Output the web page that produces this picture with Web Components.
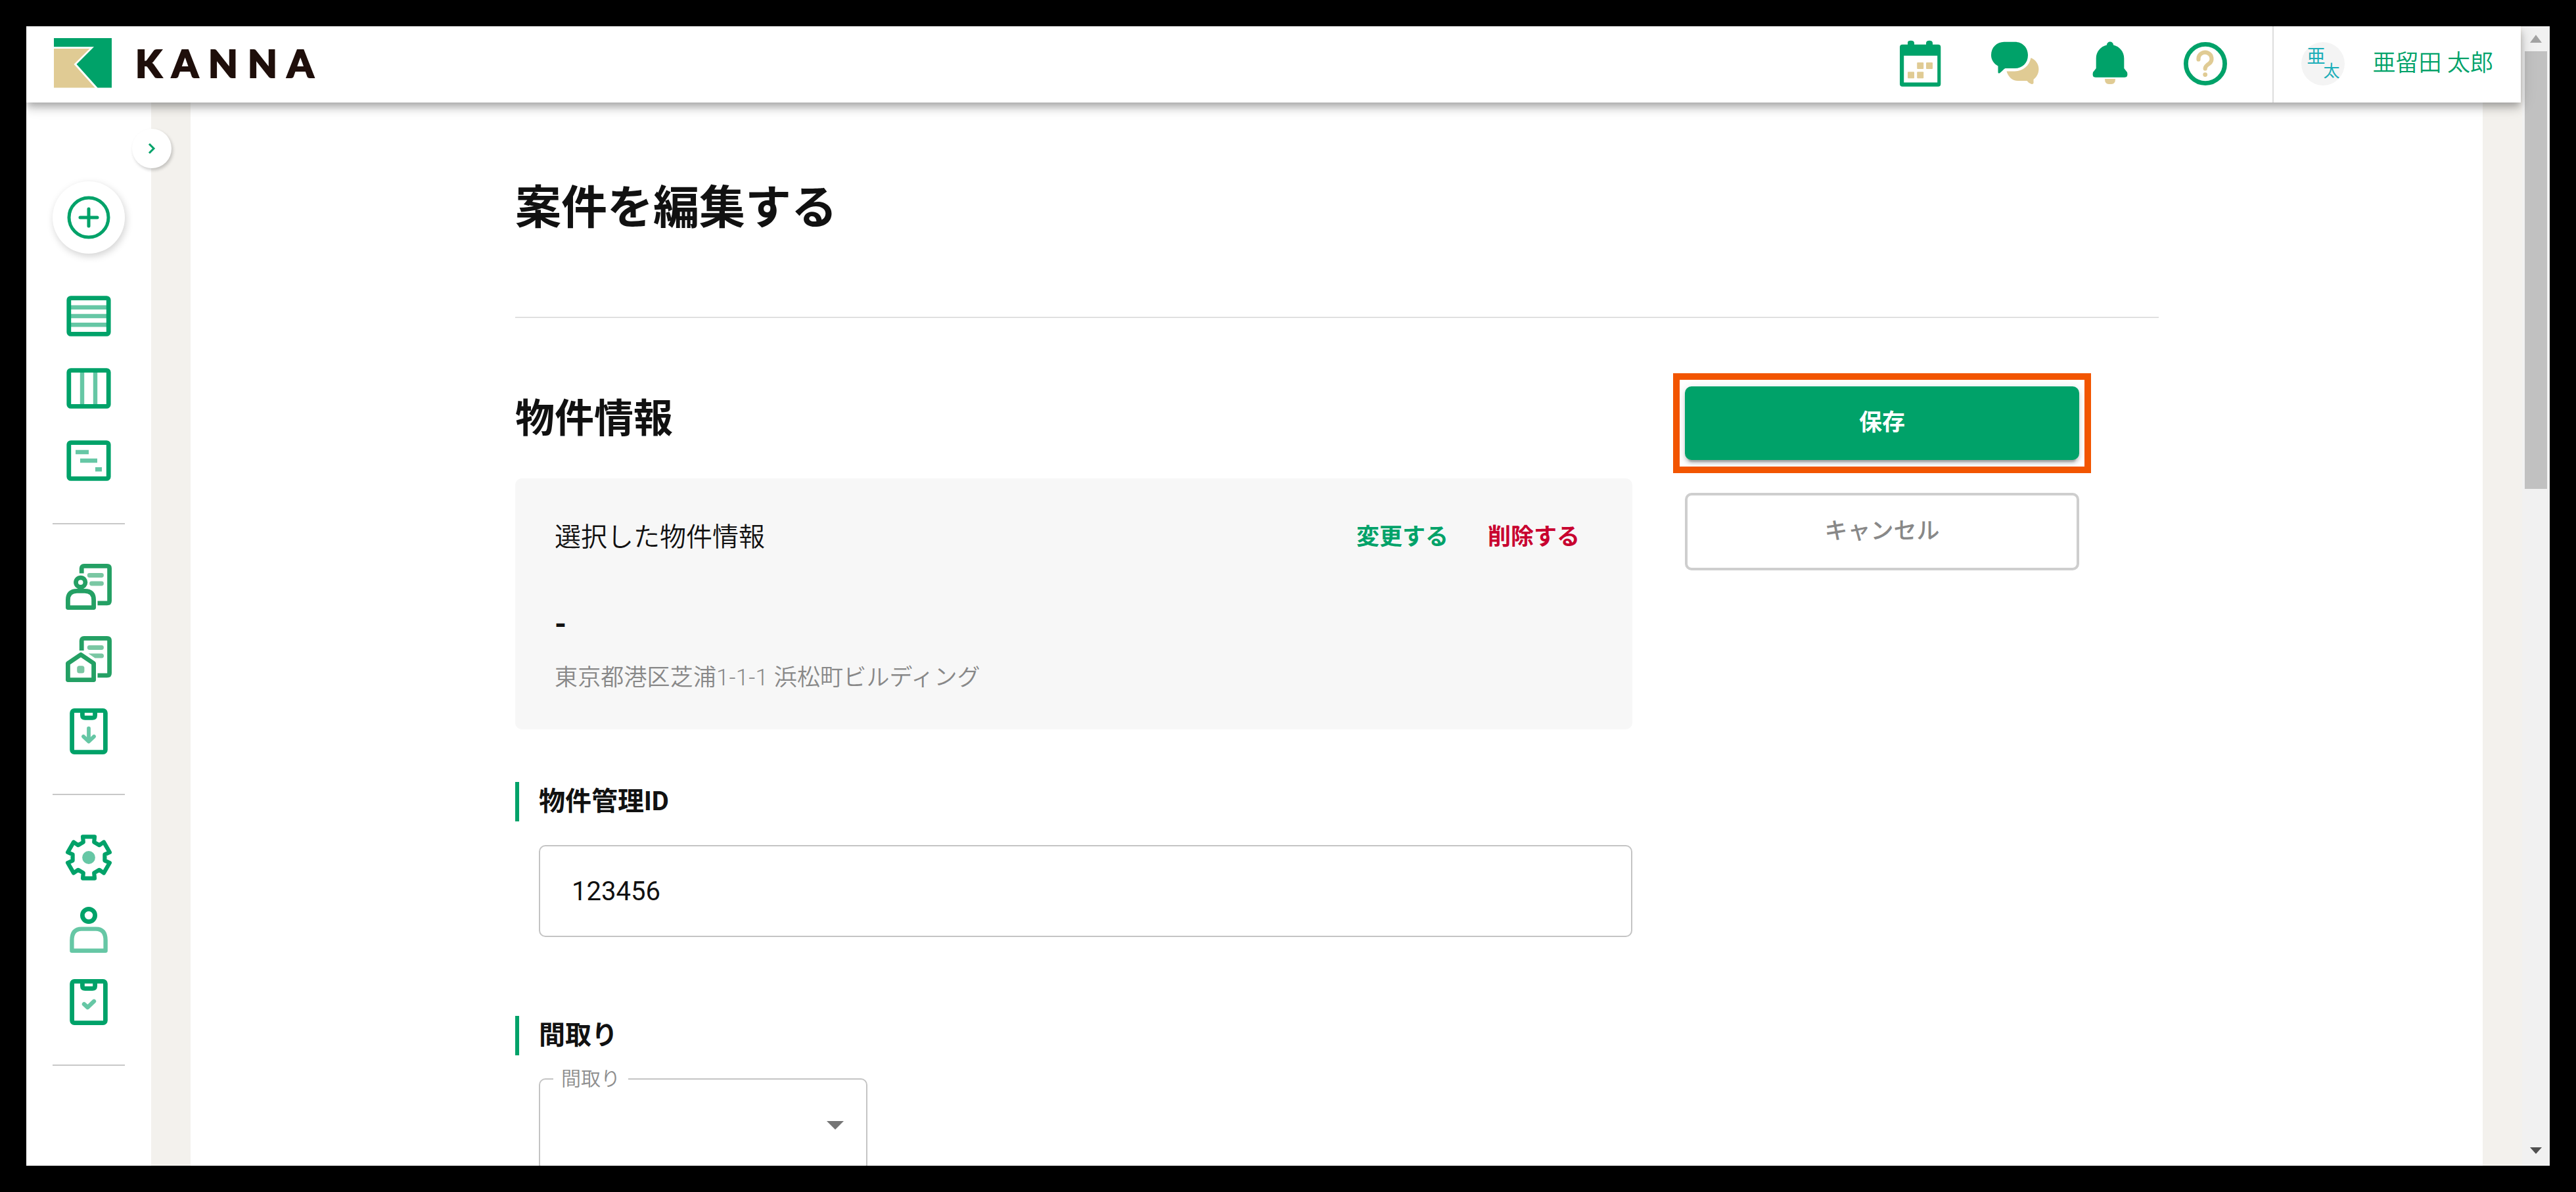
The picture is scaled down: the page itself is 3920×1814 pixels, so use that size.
<!DOCTYPE html>
<html lang="ja">
<head>
<meta charset="UTF-8">
<title>KANNA</title>
<style>
    :root {
        --green: #00a269;
        --tan: #e0cb94;
        --beige: #f3f1ed;
        --text: #111;
        --muted: #888;
    }
    html, body {
        margin: 0;
        height: 100%;
    }
    body {
        box-sizing: border-box;
        padding: 40px;
        background: #000;
        color: var(--text);
        font-family: Roboto, "Noto Sans CJK JP", sans-serif;
        overflow: hidden;
    }
</style>
</head>
<body>
<kanna-app>
    <kanna-header slot="header" initial1="亜" initial2="太">亜留田 太郎</kanna-header>
    <side-nav slot="nav"></side-nav>
    <page-title>案件を編集する</page-title>
    <edit-layout>
        <h2 slot="heading">物件情報</h2>
        <property-card>
            選択した物件情報
            <span slot="change">変更する</span>
            <span slot="remove">削除する</span>
            <span slot="name">-</span>
            <span slot="address">東京都港区芝浦1-1-1 浜松町ビルディング</span>
        </property-card>
        <form-field label="物件管理ID"><text-box>123456</text-box></form-field>
        <form-field label="間取り" tight><select-box>間取り</select-box></form-field>
        <highlight-frame slot="actions"><k-button variant="primary">保存</k-button></highlight-frame>
        <k-button slot="actions" variant="outline">キャンセル</k-button>
    </edit-layout>
</kanna-app>

<script>
// Builds an element class whose shadow root holds the given markup
function define(name, html) {
    const template = document.createElement('template');
    customElements.define(name, class extends HTMLElement {
        constructor() {
            super();
            template.innerHTML = typeof html === 'function' ? html(this) : html;
            this.attachShadow({ mode: 'open' }).appendChild(template.content.cloneNode(true));
        }
    });
}

// Six-toothed outline centred on 35,35
function gearPath() {
    const tooth = [[-8.2, -23.4], [-9, -31.6], [9, -31.6], [8.2, -23.4]];
    const points = [];
    for (let k = 0; k < 6; k++) {
        const a = k * Math.PI / 3;
        tooth.forEach(([x, y]) => {
            const px = 35 + x * Math.cos(a) - y * Math.sin(a);
            const py = 35 + x * Math.sin(a) + y * Math.cos(a);
            points.push(px.toFixed(1) + ' ' + py.toFixed(1));
        });
    }
    return 'M' + points.join('L') + 'Z';
}

const frame = '<rect x="4.8" y="7.6" width="60.4" height="54.8" rx="3"/>';
const board = '<rect x="9.6" y="3.4" width="50.8" height="63.2" rx="3.5"/><path d="M25.4 3.4V10.5Q25.4 14.4 29.4 14.4H40.6Q44.6 14.4 44.6 10.5V3.4"/>';

const ICONS = {
    list: `${frame}<path class="soft" d="M8 21.8H62M8 35H62M8 48.2H62"/>`,
    columns: `${frame}<path class="soft" d="M25 10V60M45 10V60"/>`,
    gantt: `${frame}<path class="soft" d="M15 22H35M22 35H48M45 48.3H55"/>`,
    client: `<g stroke="#24a064">
        <path d="M24.2 14.6V7Q24.2 3.4 27.8 3.4H63Q66.6 3.4 66.6 7V56.2Q66.6 59.8 63 59.8H48.5"/>
        <circle cx="22.7" cy="28.3" r="7.2"/>
        <path d="M3.4 66.6V55Q3.4 41.3 17 41.3H29Q42.6 41.3 42.6 55V66.6Z"/>
        <path class="round" stroke="#7ac7a3" d="M36.2 17.5H54.5M39.5 30H54.5"/></g>`,
    house: `<g stroke="#24a064">
        <path d="M24.2 22V7Q24.2 3.4 27.8 3.4H63Q66.6 3.4 66.6 7V56.2Q66.6 59.8 63 59.8H48.5"/>
        <path d="M3.4 66.6V41.5L23 28.2L42.6 41.5V66.6Z"/>
        <path class="round" stroke="#7ac7a3" d="M36.2 17.5H54.5"/></g>
        <path fill="#7ac7a3" stroke="none" d="M34.5 26.4H55Q58 27 58 30Q58 33.4 55 33.6H44.5Z"/>
        <rect x="17.2" y="45.3" width="11.2" height="11.2" rx="3.5" fill="#7ac7a3" stroke="none"/>`,
    inbox: `${board}<path class="soft round thin" d="M35 30.5V50M27 42.8L35 50.5L43 42.8"/>`,
    gear: `<path stroke-width="6.2" d="${gearPath()}"/><circle class="dot" cx="35" cy="35" r="9.9"/>`,
    user: `<circle cx="35" cy="13" r="9.6"/><path class="soft" d="M9.4 66.8V51Q9.4 33.6 24 33.6H46Q60.6 33.6 60.6 51V66.8Z"/>`,
    check: `${board}<path class="soft round" d="M28 38.2L33.4 43L43 33.8"/>`,
    calendar: `<path class="fill" d="M8 5.7H16V4A4 4 0 0 1 17 .5Q21 -1 24.5 .5A4 4 0 0 1 26 4V5.7H44V4A4 4 0 0 1 45.5 .5Q49 -1 52.5 .5A4 4 0 0 1 54 4V5.7H62.3A4 4 0 0 1 66.3 9.7V65.7A4 4 0 0 1 62.3 69.7H8A4 4 0 0 1 4 65.7V9.7A4 4 0 0 1 8 5.7Z"/>
        <path fill="#fff" stroke="none" d="M10.2 22.8H61.2V63.5H10.2Z"/>
        <g class="tan"><rect x="30.2" y="33" width="10" height="10" rx="1"/><rect x="44" y="33" width="10" height="10" rx="1"/>
        <rect x="16" y="47.2" width="10" height="10" rx="1"/><rect x="30.2" y="47.2" width="10" height="10" rx="1"/></g>`,
    chat: `<path class="fill" d="M19 1.7H35C46.5 1.7 55 10 55 22S46.5 42 35 42H20.5C18 43 15 47 11.5 49.5Q9.5 50 9.5 48V38.5C3 35-1 29-1 22C-1 10 7.5 1.7 19 1.7Z"/>
        <path class="tan" d="M22.5 46.5H35C48 46 57 38 59.5 26C66.5 29 71.4 35 71.4 43C71.4 50 68 55.5 63.5 59V64.5Q63 66.5 60 65.8Q56 64.5 53.5 61H40C31 61 25 55 22.5 46.5Z"/>`,
    bell: `<path class="fill" d="M30 6.5A5 5 0 0 1 40 6.5C50 9 56.3 17 56.3 27V42L61 48Q63 55.7 57 55.7H13Q7 55.7 9 48L13.7 42V27C13.7 17 20 9 30 6.5Z"/>
        <path class="tan" d="M27 58H43Q43 66 37 66H33Q27 66 27 58Z"/>`,
    help: `<circle cx="35" cy="35" r="29.6"/>
        <path class="round" stroke="#e0cb94" stroke-width="6.2" d="M24.5 28.5V27A10 9.6 0 1 1 41 34.6Q34.7 38.5 34.7 42.5"/><circle class="tan" cx="34.7" cy="51.6" r="3.4"/>`
};

define('k-icon', el => `
    <style>
        :host { display: block; width: 70px; height: 70px; }
        svg { display: block; overflow: visible; fill: none; stroke: var(--green); stroke-width: 6.8; stroke-linejoin: round; }
        .soft { stroke-opacity: .6; stroke-width: 6.4; }
        .round { stroke-linecap: round; }
        .thin { stroke-width: 5.8; }
        .dot { fill: var(--green); fill-opacity: .6; stroke: none; }
        .fill { fill: var(--green); stroke: none; }
        .tan { fill: var(--tan); stroke: none; }
    </style>
    <svg viewBox="0 0 70 70" width="70" height="70">${ICONS[el.getAttribute('name')]}</svg>
`);

define('kanna-logo', `
    <style>
        :host { display: flex; align-items: center; }
        svg { display: block; }
        span {
            margin-left: 36px;
            color: #1f0f0b;
            font: 900 58px/74px Lato, sans-serif;
            letter-spacing: 15px;
            -webkit-text-stroke: 2px #1f0f0b;
        }
    </style>
    <svg viewBox="0 0 88 76" width="88" height="76">
        <path fill="#00a269" d="M0 0H88V75.6H66.5L34.5 39.7L61 13.3H0Z"/>
        <path fill="#e0cb94" d="M0 16H54.5L30.5 39.7L62.5 75.6H0Z"/>
    </svg>
    <span>KANNA</span>
`);

define('kanna-header', el => `
    <style>
        :host {
            display: flex;
            align-items: center;
            height: 116px;
            box-sizing: border-box;
            padding-left: 42px;
            margin-right: 2px;
            background: #fff;
            box-shadow: 0 5px 10px -2.5px rgba(0,0,0,.2), 0 10px 12.5px rgba(0,0,0,.14), 0 2.5px 25px rgba(0,0,0,.12);
            position: relative;
            z-index: 2;
        }
        kanna-logo { margin-bottom: 4px; }
        nav { display: flex; gap: 74.8px; margin: 0 67.5px 3px auto; }
        .user {
            display: flex;
            align-items: center;
            align-self: stretch;
            padding: 0 42px 2px;
            border-left: 2px solid #ddd;
            color: var(--green);
            font-size: 35px;
            font-weight: 350;
            line-height: 42px;
        }
        .avatar {
            box-sizing: border-box;
            display: flex;
            flex-direction: column;
            width: 66px;
            height: 66px;
            padding: 12px 8px;
            margin-right: 42px;
            border-radius: 50%;
            background: #f4f4f4;
            color: #1caeb9;
            font-size: 28px;
            font-weight: 400;
            line-height: 22px;
        }
        .avatar span + span { align-self: flex-end; font-size: 25px; }
    </style>
    <kanna-logo></kanna-logo>
    <nav>
        <k-icon name="calendar"></k-icon>
        <k-icon name="chat"></k-icon>
        <k-icon name="bell"></k-icon>
        <k-icon name="help"></k-icon>
    </nav>
    <div class="user">
        <div class="avatar"><span>${el.getAttribute('initial1')}</span><span>${el.getAttribute('initial2')}</span></div>
        <slot></slot>
    </div>
`);

define('side-nav', `
    <style>
        :host { display: block; width: 190px; position: relative; background: #fff; }
        .toggle {
            position: absolute;
            right: -31px;
            top: 40px;
            display: grid;
            place-items: center;
            width: 60px;
            height: 60px;
            border-radius: 50%;
            background: #fff;
            box-shadow: 2px 3px 5px rgba(0,0,0,.2);
        }
        .add {
            display: grid;
            place-items: center;
            width: 110px;
            height: 110px;
            margin: 0 auto 40px;
            border-radius: 50%;
            background: #fff;
            box-shadow: 2px 4px 12px rgba(0,0,0,.18);
        }
        .items { display: flex; flex-direction: column; align-items: center; padding-top: 120px; }
        .group { width: 110px; border-bottom: 2px solid #c8c8c8; padding-bottom: 40px; margin-bottom: 40px; }
        .group k-icon { padding: 20px; }
    </style>
    <div class="toggle">
        <svg width="16" height="20" fill="none" stroke="#00a269" stroke-width="3"><path d="M4 3L11 10L4 17"/></svg>
    </div>
    <div class="items">
        <div class="add">
            <svg width="66" height="66" fill="none" stroke="#00a269" stroke-width="5" stroke-linecap="round">
                <circle cx="33" cy="33" r="30"/><path d="M33 20V46M20 33H46"/>
            </svg>
        </div>
        <div class="group"><k-icon name="list"></k-icon><k-icon name="columns"></k-icon><k-icon name="gantt"></k-icon></div>
        <div class="group"><k-icon name="client"></k-icon><k-icon name="house"></k-icon><k-icon name="inbox"></k-icon></div>
        <div class="group"><k-icon name="gear"></k-icon><k-icon name="user"></k-icon><k-icon name="check"></k-icon></div>
    </div>
`);

define('scroll-bar', `
    <style>
        :host { display: flex; flex-direction: column; width: 42px; background: #f1f1f1; align-items: center; }
        svg { display: block; width: 18px; height: 12px; padding: 13px 0; }
        .thumb + svg { height: 10px; padding: 14px 0 18px; }
        .thumb { width: 34px; height: 666px; margin-bottom: auto; background: #c1c1c1; }
    </style>
    <svg viewBox="0 0 18 12"><path fill="#a3a3a3" d="M9 0L18 12H0Z"/></svg>
    <div class="thumb"></div>
    <svg viewBox="0 0 18 10"><path fill="#505050" d="M0 0H18L9 10Z"/></svg>
`);

define('kanna-app', `
    <style>
        :host { display: flex; height: 100%; overflow: hidden; background: var(--beige); }
        .view { flex: 1; display: flex; flex-direction: column; min-width: 0; }
        .body { flex: 1; display: flex; min-height: 0; }
        main {
            flex: 1;
            margin: 0 60px;
            padding: 104px 493px 0 494px;
            background: #fff;
            overflow: hidden;
        }
    </style>
    <div class="view">
        <slot name="header"></slot>
        <div class="body">
            <slot name="nav"></slot>
            <main><slot></slot></main>
        </div>
    </div>
    <scroll-bar></scroll-bar>
`);

define('page-title', `
    <style>
        :host { display: block; height: 222px; border-bottom: 2px solid #e0e0e0; }
        h1 { margin: 0; font-size: 70px; line-height: 114px; }
    </style>
    <h1><slot></slot></h1>
`);

define('edit-layout', `
    <style>
        :host { display: flex; gap: 62px; padding-top: 84px; }
        .form { width: 1700px; }
        .actions { width: 636px; }
        ::slotted(h2) { margin: 12px 0 0; height: 148px; font-size: 60px; line-height: 115px; }
    </style>
    <div class="form">
        <slot name="heading"></slot>
        <slot></slot>
    </div>
    <div class="actions"><slot name="actions"></slot></div>
`);

define('property-card', `
    <style>
        :host {
            display: block;
            box-sizing: border-box;
            height: 382px;
            padding: 60px 80px 0 60px;
            margin-bottom: 80px;
            border-radius: 10px;
            background: #f7f7f7;
            font-size: 40px;
            font-weight: 350;
            line-height: 60px;
        }
        .top { display: flex; gap: 60px; }
        .top div { flex: 1; }
        ::slotted([slot="change"]), ::slotted([slot="remove"]) { font-size: 35px; font-weight: 700; color: var(--green); }
        ::slotted([slot="remove"]) { color: #c8002f; }
        .name { margin-top: 72px; font-size: 46px; font-weight: 700; }
        .address { margin-top: 22px; font-size: 35px; letter-spacing: .15px; color: var(--muted); }
    </style>
    <div class="top"><div><slot></slot></div><slot name="change"></slot><slot name="remove"></slot></div>
    <div class="name"><slot name="name"></slot></div>
    <div class="address"><slot name="address"></slot></div>
`);

define('form-field', el => `
    <style>
        :host { display: block; margin-bottom: 120px; }
        .label {
            border-left: 6px solid var(--green);
            padding-left: 30px;
            margin-bottom: 36px;
            font-size: 40px;
            font-weight: 700;
            line-height: 60px;
        }
        :host([tight]) .label { margin-bottom: 16px; }
        .control { padding-left: 36px; }
    </style>
    <div class="label">${el.getAttribute('label')}</div>
    <div class="control"><slot></slot></div>
`);

define('text-box', `
    <style>
        :host {
            display: block;
            box-sizing: border-box;
            height: 140px;
            padding: 0 48px;
            border: 2px solid #c4c4c4;
            border-radius: 10px;
            font-size: 40px;
            line-height: 137px;
        }
    </style>
    <slot></slot>
`);

define('select-box', `
    <style>
        :host { display: block; width: 500px; }
        fieldset {
            display: flex;
            align-items: center;
            justify-content: flex-end;
            box-sizing: border-box;
            height: 160px;
            margin: 0;
            padding: 0 34px 18px 20px;
            border: 2px solid #c4c4c4;
            border-radius: 10px;
        }
        legend { padding: 0 12px; font-size: 30px; font-weight: 350; line-height: 40px; color: #8e8e8e; }
        svg { display: block; }
    </style>
    <fieldset>
        <legend><slot></slot></legend>
        <svg width="26" height="13"><path fill="#757575" d="M0 0H26L13 13Z"/></svg>
    </fieldset>
`);

define('highlight-frame', `
    <style>
        :host { display: block; border: 10px solid #f25500; padding: 10px 8px; }
    </style>
    <slot></slot>
`);

define('k-button', `
    <style>
        :host {
            display: block;
            box-sizing: border-box;
            border-radius: 10px;
            font-size: 35px;
            font-weight: 700;
            text-align: center;
        }
        :host([variant="primary"]) {
            height: 112px;
            line-height: 112px;
            background: var(--green);
            color: #fff;
            box-shadow: 0 7.5px 2.5px -5px rgba(0,0,0,.2), 0 5px 5px rgba(0,0,0,.14), 0 2.5px 12.5px rgba(0,0,0,.12);
        }
        :host([variant="outline"]) {
            height: 118px;
            margin: 30px 18px 0;
            border: 4px solid #cecece;
            line-height: 109px;
            font-weight: 500;
            color: var(--muted);
        }
    </style>
    <slot></slot>
`);
</script>
</body>
</html>
